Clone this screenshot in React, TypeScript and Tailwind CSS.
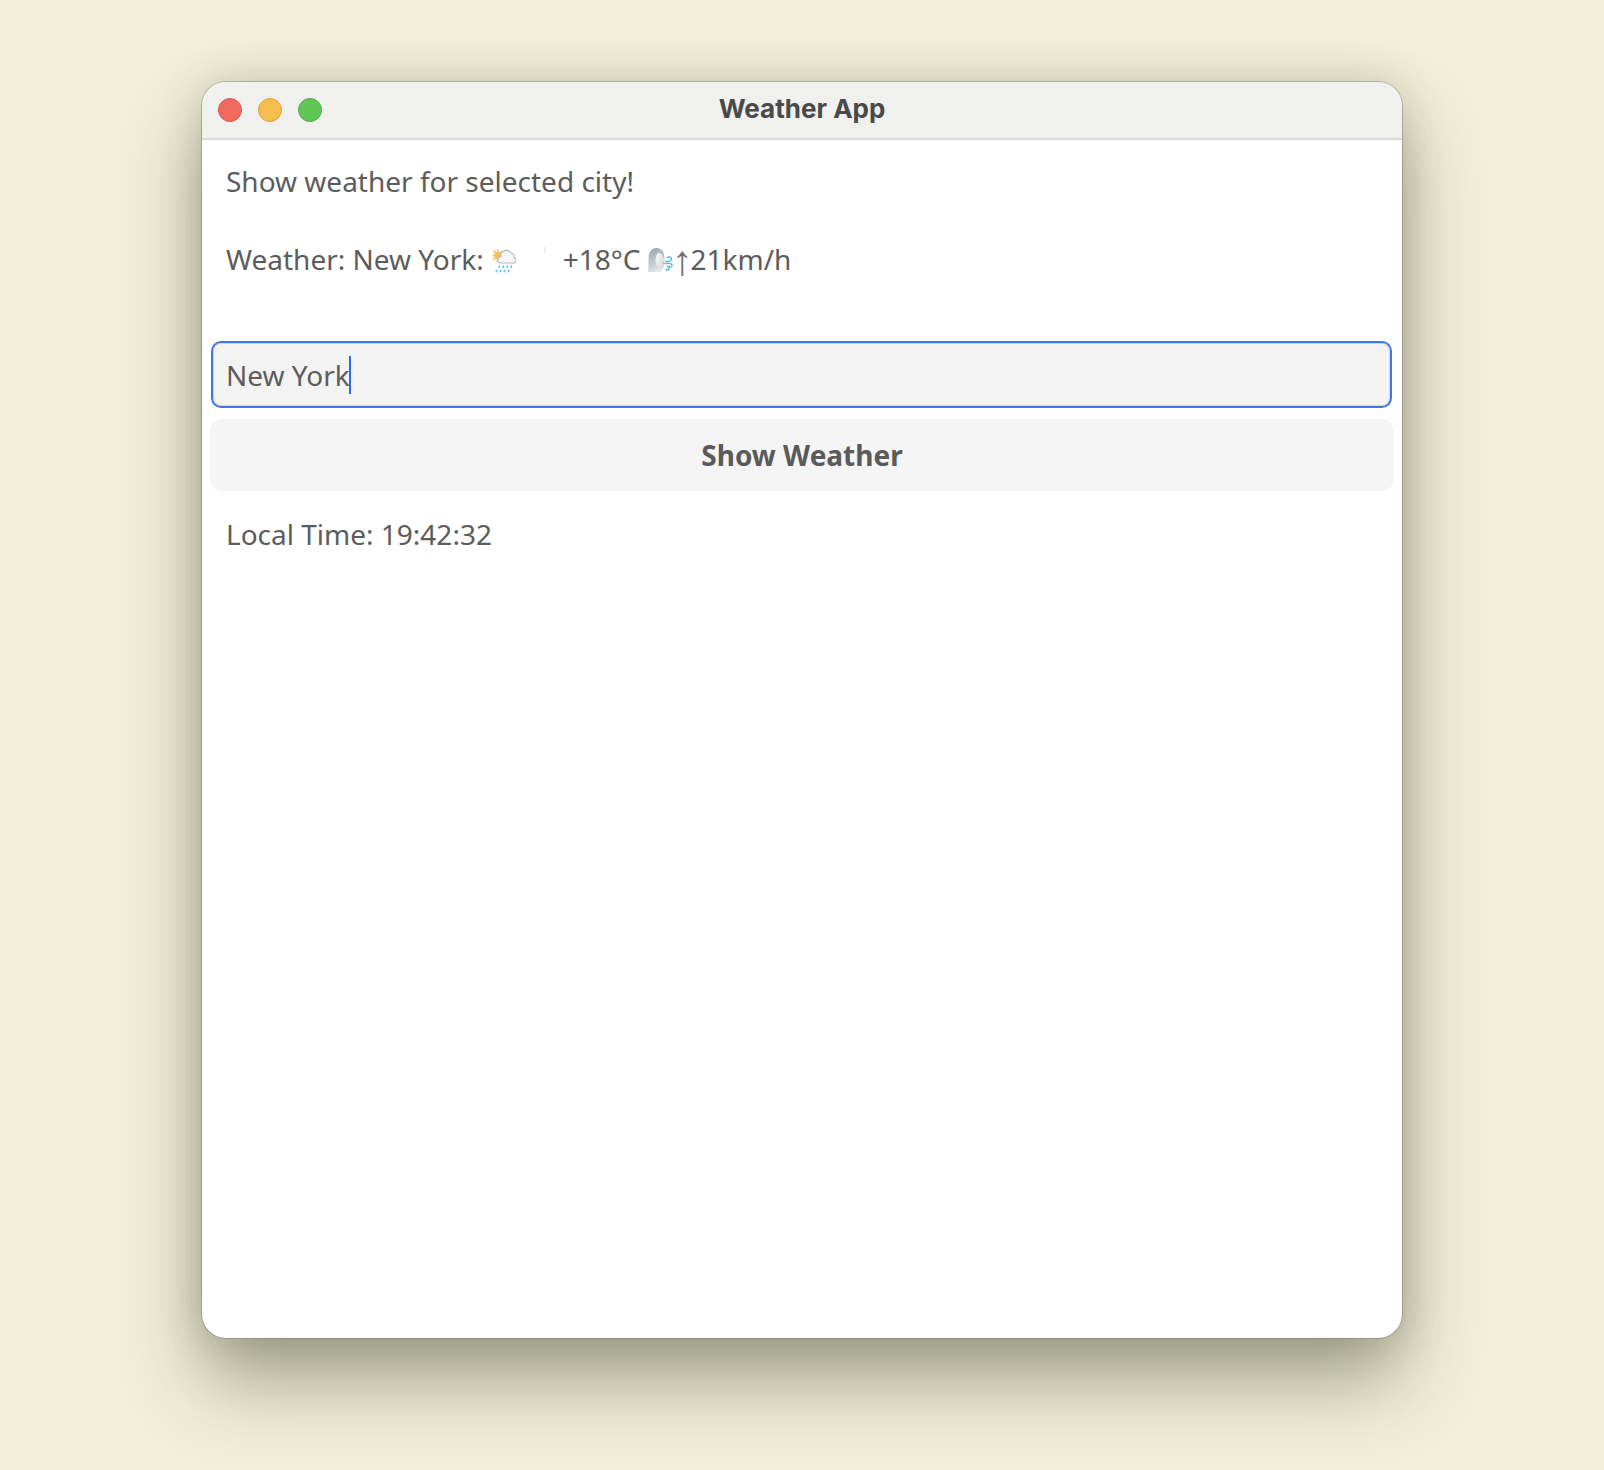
import React from 'react';

function RainCloud() {
  return (
    <svg width="24" height="25" viewBox="0 0 24 25" className="block shrink-0">
      {/* sun */}
      <g stroke="#f5b83d" strokeWidth="1.200" strokeLinecap="round">
        <path d="M6 1.500v2M.8 7.500h2M2 3l1.500 1.500M10 3 8.800 4.500M1.500 11.500l1.600-1.200M5 13.500l.4-1.500" />
      </g>
      <circle cx="6" cy="7.500" r="3.800" fill="#f7c04a" />
      {/* cloud */}
      <path
        d="M8.500 15a3 3 0 0 1-2.700-3.200 3.100 3.100 0 0 1 3.200-3A5 5 0 0 1 12 3a5.600 5.600 0 0 1 7 2 3.700 3.700 0 0 1 3 5 2.600 2.600 0 0 1 .6 5Z"
        fill="#f7f8fa"
        stroke="#aeb6c2"
        strokeWidth="1.100"
      />
      {/* rain */}
      <g stroke="#5cc8f7" strokeWidth="1.700" strokeLinecap="round">
        <path d="M7.500 18l-.4 1.300M11.500 18l-.4 1.300M15.500 18l-.4 1.300M19.500 18l-.4 1.300" />
        <path d="M4.800 22.300l-.4 1.300M8.800 22.300l-.4 1.300M12.800 22.300l-.4 1.300M16.800 22.300l-.4 1.300" />
      </g>
    </svg>
  );
}

function WindFace() {
  return (
    <svg width="27" height="25" viewBox="0 0 27 25" className="block shrink-0">
      <defs>
        <linearGradient id="hair" x1="0.2" y1="0" x2="0.5" y2="1">
          <stop offset="0" stopColor="#9ea6ad" />
          <stop offset="0.6" stopColor="#c3c8cd" />
          <stop offset="1" stopColor="#e6e8ea" />
        </linearGradient>
        <linearGradient id="face" x1="0" y1="0" x2="1" y2="1">
          <stop offset="0" stopColor="#f7f8f8" />
          <stop offset="1" stopColor="#d3d7da" />
        </linearGradient>
      </defs>
      {/* hair and neck */}
      <path d="M0 24c.8-5 .4-10 .6-15C.8 3.500 4 0 8.500 0 12.500 0 15 2.500 16 6l.5 4-.5 9-3 5Z" fill="url(#hair)" />
      {/* face in profile */}
      <path d="M10 4.500c2.800.5 4.600 2.500 5.200 5.500l1.800 4-1.500.8.600 1.500-.9.500.2 1.500c0 1.500-1.500 2.200-3.500 1.700-2.600-.6-4.400-3.500-4.400-7.500 0-3 .9-5.500 2.500-8Z" fill="url(#face)" />
      <path d="M15.300 15.200h1.500" stroke="#6f767c" strokeWidth=".9" />
      {/* wind */}
      <g fill="none" stroke="#4fb7ea" strokeWidth="1.300" strokeLinecap="round">
        <path d="M19 9.500c2-1.500 5 0 4.500 2-.4 1.500-3 2-5.500 2" />
        <path d="M18 15.500c3-.4 6 0 6.200 1.800.1 1.800-2.700 2.400-3.700.9" />
        <path d="M19.500 18c1.500 1 2.500 2.500 1 4-1 .8-2.500.2-2.300-1" />
      </g>
    </svg>
  );
}

export default function App() {
  return (
    <div className="min-h-[1470px] bg-[#f1efd9] pt-[82px] pb-[132px] px-[202px] font-['Noto_Sans','Open_Sans',sans-serif] text-[#5c5c5c]">
      <div className="h-[1256px] w-[1200px] overflow-hidden rounded-[24px] bg-white flex flex-col shadow-[0_0_0_1px_rgba(120,120,105,0.45),0_44px_76px_rgba(60,60,40,0.42),0_0_44px_rgba(60,60,40,0.2)]">
        {/* Title bar */}
        <div className="relative flex h-[58px] shrink-0 items-center border-b-2 border-[#dadad7] bg-[#f0f0ee] pl-[16px]">
          <div className="flex gap-[16px]">
            <span className="h-[24px] w-[24px] rounded-full border border-[#d9574e] bg-[#f06a60]" />
            <span className="h-[24px] w-[24px] rounded-full border border-[#dfa33c] bg-[#f6bd4f]" />
            <span className="h-[24px] w-[24px] rounded-full border border-[#4fae44] bg-[#60c655]" />
          </div>
          <div className="absolute inset-x-0 top-[10px] text-center font-['Inter',sans-serif] text-[26px] font-bold leading-[34px] text-[#4a4a4a]">
            Weather App
          </div>
          <span className="absolute right-[46px] top-0 h-[42px] w-[36px] rounded-b-full bg-[#f1f1ef]" />
        </div>

        {/* Content */}
        <div className="flex flex-col">
          <p className="pl-[24px] pt-[21px] text-[28px] leading-[40px]">Show weather for selected city!</p>
          <div className="mt-[38px] flex h-[40px] items-center pl-[24px] text-[28px] leading-[40px]">
            <span>Weather: New York:</span>
            <span className="ml-[8px] mt-[3px]"><RainCloud /></span>
            <span className="ml-[28px] mb-[18px] h-[6px] w-px bg-[#e4e4e4]" />
            <span className="ml-[18px]">+18°C</span>
            <span className="ml-[8px] mt-[3px]"><WindFace /></span>
            <span className="flex h-[40px] w-[15px] -translate-x-px translate-y-[2px] justify-center font-['Liberation_Sans',sans-serif] text-[42px] leading-[40px] text-[#707070]">↑</span>
            <span>21km/h</span>
          </div>

          <div className="ml-[9px] mr-[10px] mt-[62px] flex h-[67px] items-center rounded-[10px] border-2 border-[#3b78e7] bg-[#f3f3f3] pl-[13px] text-[28px] shadow-[inset_0_0_0_1px_#d6d6d6]">
            <span>New York</span>
            <span className="-ml-px h-[38px] w-[2px] bg-[#2f6ae6]" />
          </div>

          <div className="mx-[8px] mt-[11px] flex h-[72px] items-center justify-center rounded-[12px] bg-[#f5f5f5] text-[28px] font-bold text-[#5a5a5a]">
            Show Weather
          </div>

          <p className="pl-[24px] pt-[23px] text-[28px] leading-[40px]">Local Time: 19:42:32</p>
        </div>
      </div>
    </div>
  );
}
